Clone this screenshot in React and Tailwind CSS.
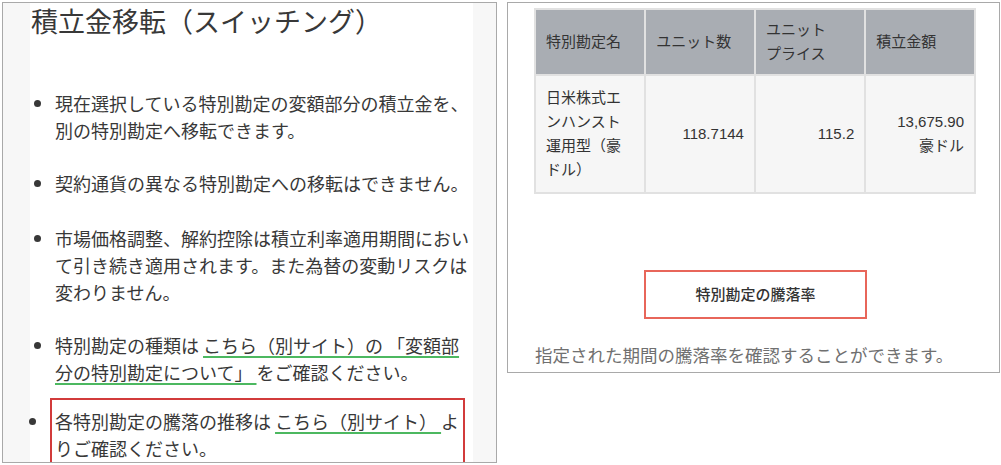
import React from "react";

const jp = { fontFamily: '"Noto Sans CJK JP", "Noto Sans", sans-serif' };
const tableFont = { fontFamily: '"Liberation Sans", "Noto Sans CJK JP", sans-serif' };

// 緑の下線つきリンク
function Link({ children }) {
  return (
    <a className="text-[#383838] underline decoration-[#4cb860] decoration-[1.5px] underline-offset-[3px]">
      {children}
    </a>
  );
}

function LeftPanel() {
  return (
    <div className="w-[495px] h-[461px] border border-[#a9a9a9] bg-[#f7f7f7] pl-[27px] pr-[23px] overflow-hidden">
      <div className="bg-white h-full text-[#383838]" style={jp}>
        <h1 className="text-[27px] leading-[36px] font-normal pl-[1px]">積立金移転（スイッチング）</h1>

        <ul className="list-disc pl-[25px] text-[18px] leading-[27px] whitespace-nowrap mt-[51px]">
          <li>
            現在選択している特別勘定の変額部分の積立金を、
            <br />
            別の特別勘定へ移転できます。
          </li>
          <li className="mt-[26px]">契約通貨の異なる特別勘定への移転はできません。</li>
          <li className="mt-[28px]">
            市場価格調整、解約控除は積立利率適用期間におい
            <br />
            て引き続き適用されます。また為替の変動リスクは
            <br />
            変わりません。
          </li>
          <li className="mt-[26px]">
            特別勘定の種類は <Link>こちら（別サイト）の 「変額部</Link>
            <br />
            <Link>分の特別勘定について」 </Link>をご確認ください。
          </li>
          <li className="mt-[12px] -ml-[5px] pl-[3px] pt-[8px] pb-[6px] border-2 border-[#d23b3b] w-[415px]">
            各特別勘定の騰落の推移は <Link>こちら（別サイト） </Link>よ
            <br />
            りご確認ください。
          </li>
        </ul>
      </div>
    </div>
  );
}

function RightPanel() {
  return (
    <div className="ml-[10px] w-[493px] h-[371px] border border-[#a9a9a9] bg-white">
      <table
        className="ml-[26px] mt-[5px] w-[442px] border-collapse text-[15px] leading-[24px] text-[#333]"
        style={tableFont}
      >
        <thead>
          <tr className="bg-[#a9adb3]">
            <th className="w-[111px] border-2 border-[#e1e1e1] px-[10px] py-[8px] text-left font-normal">特別勘定名</th>
            <th className="w-[110px] border-2 border-[#e1e1e1] px-[10px] py-[8px] text-left font-normal">ユニット数</th>
            <th className="w-[111px] border-2 border-[#e1e1e1] px-[10px] py-[8px] text-left font-normal">
              ユニット
              <br />
              プライス
            </th>
            <th className="w-[110px] border-2 border-[#e1e1e1] px-[10px] py-[8px] text-left font-normal">積立金額</th>
          </tr>
        </thead>
        <tbody>
          <tr className="bg-[#f6f6f6]">
            <td className="border-2 border-[#e1e1e1] px-[10px] py-[10px] align-top">
              日米株式エ
              <br />
              ンハンスト
              <br />
              運用型（豪
              <br />
              ドル）
            </td>
            <td className="border-2 border-[#e1e1e1] px-[10px] text-right align-middle">118.7144</td>
            <td className="border-2 border-[#e1e1e1] px-[10px] text-right align-middle">115.2</td>
            <td className="border-2 border-[#e1e1e1] px-[10px] text-right align-middle">
              13,675.90
              <br />
              豪ドル
            </td>
          </tr>
        </tbody>
      </table>

      <div className="flex justify-center mt-[76px] pl-[4px]">
        <button
          className="w-[223px] h-[49px] border-2 border-[#e8665a] bg-white text-[15px] font-medium text-[#333]"
          style={jp}
        >
          特別勘定の騰落率
        </button>
      </div>

      <p className="mt-[24px] ml-[27px] text-[17.5px] leading-[24px] text-[#707070] whitespace-nowrap" style={jp}>
        指定された期間の騰落率を確認することができます。
      </p>
    </div>
  );
}

export default function App() {
  return (
    <div className="w-[1001px] h-[465px] bg-white flex pt-[2px] pl-[2px] overflow-hidden">
      <LeftPanel />
      <RightPanel />
    </div>
  );
}
